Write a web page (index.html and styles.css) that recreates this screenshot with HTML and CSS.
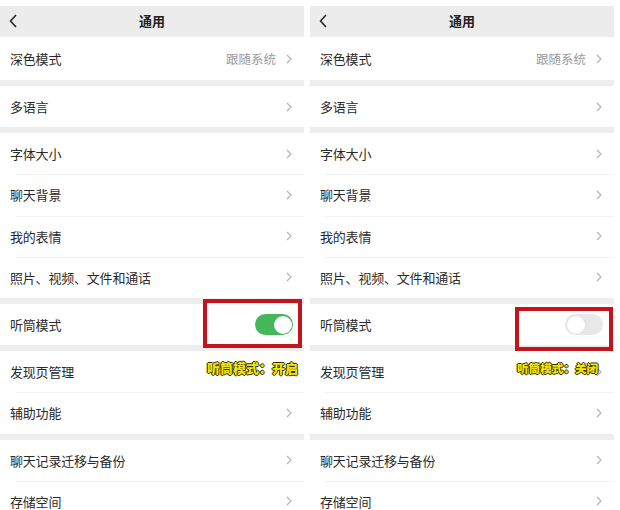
FILE: index.html
```html
<!DOCTYPE html>
<html lang="zh-CN">
<head>
<meta charset="utf-8">
<title>通用</title>
<link rel="stylesheet" href="styles.css">
</head>
<body>
<div class="screens">
  <section class="panel">
    <header class="navbar">
      <svg class="back" width="8" height="14" viewBox="0 0 8 14"><polyline points="7,1 1.5,7 7,13" fill="none" stroke="#222" stroke-width="1.5"/></svg>
      <span class="title">通用</span>
    </header>
    <div class="group first">
      <div class="row"><span class="label">深色模式</span><span class="value">跟随系统</span><svg class="chev" width="6" height="10" viewBox="0 0 6 10"><polyline points="1,1 5,5 1,9" fill="none" stroke="#b4b4b4" stroke-width="1.2"/></svg></div>
    </div>
    <div class="group">
      <div class="row"><span class="label">多语言</span><svg class="chev" width="6" height="10" viewBox="0 0 6 10"><polyline points="1,1 5,5 1,9" fill="none" stroke="#b4b4b4" stroke-width="1.2"/></svg></div>
    </div>
    <div class="group">
      <div class="row"><span class="label">字体大小</span><svg class="chev" width="6" height="10" viewBox="0 0 6 10"><polyline points="1,1 5,5 1,9" fill="none" stroke="#b4b4b4" stroke-width="1.2"/></svg></div>
      <div class="row"><span class="label">聊天背景</span><svg class="chev" width="6" height="10" viewBox="0 0 6 10"><polyline points="1,1 5,5 1,9" fill="none" stroke="#b4b4b4" stroke-width="1.2"/></svg></div>
      <div class="row"><span class="label">我的表情</span><svg class="chev" width="6" height="10" viewBox="0 0 6 10"><polyline points="1,1 5,5 1,9" fill="none" stroke="#b4b4b4" stroke-width="1.2"/></svg></div>
      <div class="row"><span class="label">照片、视频、文件和通话</span><svg class="chev" width="6" height="10" viewBox="0 0 6 10"><polyline points="1,1 5,5 1,9" fill="none" stroke="#b4b4b4" stroke-width="1.2"/></svg></div>
    </div>
    <div class="group">
      <div class="row"><span class="label">听筒模式</span><span class="switch on"><span class="knob"></span></span></div>
    </div>
    <div class="group">
      <div class="row"><span class="label">发现页管理</span><svg class="chev" width="6" height="10" viewBox="0 0 6 10"><polyline points="1,1 5,5 1,9" fill="none" stroke="#b4b4b4" stroke-width="1.2"/></svg></div>
      <div class="row"><span class="label">辅助功能</span><svg class="chev" width="6" height="10" viewBox="0 0 6 10"><polyline points="1,1 5,5 1,9" fill="none" stroke="#b4b4b4" stroke-width="1.2"/></svg></div>
    </div>
    <div class="group">
      <div class="row"><span class="label">聊天记录迁移与备份</span><svg class="chev" width="6" height="10" viewBox="0 0 6 10"><polyline points="1,1 5,5 1,9" fill="none" stroke="#b4b4b4" stroke-width="1.2"/></svg></div>
      <div class="row"><span class="label">存储空间</span><svg class="chev" width="6" height="10" viewBox="0 0 6 10"><polyline points="1,1 5,5 1,9" fill="none" stroke="#b4b4b4" stroke-width="1.2"/></svg></div>
    </div>
    <div class="mark mark-on"></div>
    <div class="caption caption-on">听筒模式：开启</div>
  </section>

  <section class="panel">
    <header class="navbar">
      <svg class="back" width="8" height="14" viewBox="0 0 8 14"><polyline points="7,1 1.5,7 7,13" fill="none" stroke="#222" stroke-width="1.5"/></svg>
      <span class="title">通用</span>
    </header>
    <div class="group first">
      <div class="row"><span class="label">深色模式</span><span class="value">跟随系统</span><svg class="chev" width="6" height="10" viewBox="0 0 6 10"><polyline points="1,1 5,5 1,9" fill="none" stroke="#b4b4b4" stroke-width="1.2"/></svg></div>
    </div>
    <div class="group">
      <div class="row"><span class="label">多语言</span><svg class="chev" width="6" height="10" viewBox="0 0 6 10"><polyline points="1,1 5,5 1,9" fill="none" stroke="#b4b4b4" stroke-width="1.2"/></svg></div>
    </div>
    <div class="group">
      <div class="row"><span class="label">字体大小</span><svg class="chev" width="6" height="10" viewBox="0 0 6 10"><polyline points="1,1 5,5 1,9" fill="none" stroke="#b4b4b4" stroke-width="1.2"/></svg></div>
      <div class="row"><span class="label">聊天背景</span><svg class="chev" width="6" height="10" viewBox="0 0 6 10"><polyline points="1,1 5,5 1,9" fill="none" stroke="#b4b4b4" stroke-width="1.2"/></svg></div>
      <div class="row"><span class="label">我的表情</span><svg class="chev" width="6" height="10" viewBox="0 0 6 10"><polyline points="1,1 5,5 1,9" fill="none" stroke="#b4b4b4" stroke-width="1.2"/></svg></div>
      <div class="row"><span class="label">照片、视频、文件和通话</span><svg class="chev" width="6" height="10" viewBox="0 0 6 10"><polyline points="1,1 5,5 1,9" fill="none" stroke="#b4b4b4" stroke-width="1.2"/></svg></div>
    </div>
    <div class="group">
      <div class="row"><span class="label">听筒模式</span><span class="switch off"><span class="knob"></span></span></div>
    </div>
    <div class="group">
      <div class="row"><span class="label">发现页管理</span><svg class="chev" width="6" height="10" viewBox="0 0 6 10"><polyline points="1,1 5,5 1,9" fill="none" stroke="#b4b4b4" stroke-width="1.2"/></svg></div>
      <div class="row"><span class="label">辅助功能</span><svg class="chev" width="6" height="10" viewBox="0 0 6 10"><polyline points="1,1 5,5 1,9" fill="none" stroke="#b4b4b4" stroke-width="1.2"/></svg></div>
    </div>
    <div class="group">
      <div class="row"><span class="label">聊天记录迁移与备份</span><svg class="chev" width="6" height="10" viewBox="0 0 6 10"><polyline points="1,1 5,5 1,9" fill="none" stroke="#b4b4b4" stroke-width="1.2"/></svg></div>
      <div class="row"><span class="label">存储空间</span><svg class="chev" width="6" height="10" viewBox="0 0 6 10"><polyline points="1,1 5,5 1,9" fill="none" stroke="#b4b4b4" stroke-width="1.2"/></svg></div>
    </div>
    <div class="mark mark-off"></div>
    <div class="caption caption-off">听筒模式：关闭</div>
  </section>
</div>
</body>
</html>
```

FILE: styles.css
```css
html, body {
  margin: 0;
  padding: 0;
  background: #ffffff;
}
body {
  width: 620px;
  height: 510px;
  overflow: hidden;
  font-family: "Noto Sans CJK SC", "Noto Sans", sans-serif;
  color: #2a2a2a;
}
.screens {
  display: flex;
  gap: 6px;
  padding-top: 6px;
}
.panel {
  position: relative;
  width: 304px;
  height: 504px;
  overflow: hidden;
  background: #ededed;
}
.navbar {
  height: 31px;
  display: flex;
  align-items: center;
  justify-content: center;
  position: relative;
  background: #ececec;
}
.back {
  position: absolute;
  left: 9px;
  top: 8px;
}
.title {
  font-size: 13px;
  font-weight: 700;
  color: #222;
  margin-top: -2px;
}
.group {
  background: #fff;
  margin-top: 6px;
}
.group.first {
  margin-top: 0;
}
.group.first .row {
  height: 43px;
}
.row {
  height: 41.2px;
  display: flex;
  align-items: center;
  padding: 0 12px 0 10px;
  box-sizing: border-box;
  position: relative;
}
.row + .row::before {
  content: "";
  position: absolute;
  left: 15px;
  right: 0;
  top: 0;
  height: 1px;
  background: #f3f3f3;
}
.label {
  font-size: 13px;
  flex: 1;
  letter-spacing: -0.2px;
}
.value {
  font-size: 12.5px;
  color: #9a9a9a;
  margin-right: 10px;
}
.chev {
  flex: none;
}
.switch {
  position: relative;
  width: 38px;
  height: 21px;
  border-radius: 11px;
  margin-right: -1px;
  box-sizing: border-box;
}
.switch.on {
  background: #45b75b;
}
.switch.off {
  background: #e8e8e8;
}
.knob {
  position: absolute;
  top: 1.5px;
  width: 18px;
  height: 18px;
  border-radius: 50%;
  background: #fff;
  box-shadow: 0 0 1px rgba(0,0,0,0.15);
}
.switch.on .knob {
  right: 1.5px;
}
.switch.off .knob {
  left: 1.5px;
}
.mark {
  position: absolute;
  border: 4px solid #c2141d;
  box-sizing: border-box;
}
.mark-on {
  left: 203px;
  top: 293px;
  width: 99px;
  height: 49px;
}
.mark-off {
  left: 205px;
  top: 301px;
  width: 98px;
  height: 44px;
}
.caption {
  position: absolute;
  font-size: 13px;
  font-weight: 900;
  color: #f2e40a;
  text-shadow: 0 0 1px #2a2a00, 1px 0 0 #3a3500, -1px 0 0 #3a3500, 0 1px 0 #3a3500, 0 -1px 0 #3a3500;
  white-space: nowrap;
}
.caption-on {
  left: 207px;
  top: 352px;
}
.caption-off {
  left: 207px;
  top: 354px;
  font-size: 11.6px;
}
```
